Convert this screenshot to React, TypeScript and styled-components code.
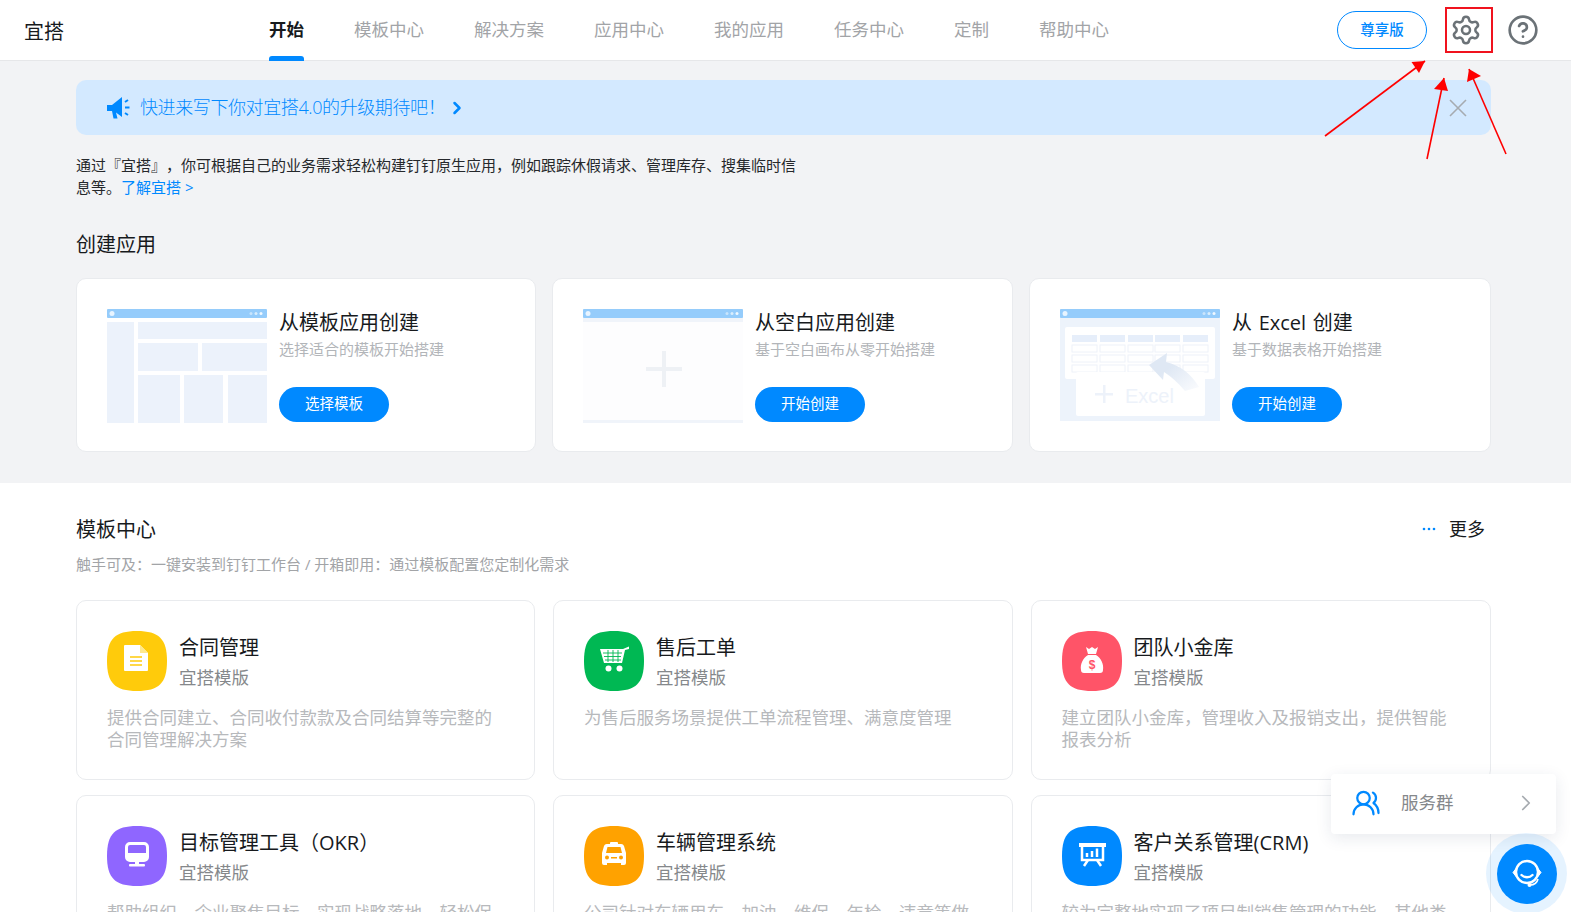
import React from "react";
import styled, { createGlobalStyle } from "styled-components";
import { ChevronRight, CircleHelp, Settings, UsersRound } from "lucide-react";

const FONT = `"Open Sans", "Noto Sans CJK SC", sans-serif`;
const BLUE = "#0089ff";

const GlobalStyle = createGlobalStyle`
    html, body {
        margin: 0;
        padding: 0;
        height: 100%;
        overflow: hidden;
        background: #fff;
        font-family: ${FONT};
        text-spacing-trim: space-all;
    }
    * {
        box-sizing: border-box;
    }
`;

const Page = styled.div`
    position: relative;
    width: 1571px;
    height: 912px;
    overflow: hidden;
    background: #fff;
    color: #171a1d;
`;

const Header = styled.header`
    display: flex;
    align-items: center;
    height: 61px;
    padding: 0 32px 0 24px;
    background: #fff;
    border-bottom: 1px solid #e6e7e9;
`;

const Logo = styled.div`
    width: 245px;
    padding-top: 3px;
    font-size: 20px;
    line-height: 60px;
`;

const Menu = styled.nav`
    display: flex;
    gap: 50px;
    height: 60px;
`;

const MenuItem = styled.a<{ $active?: boolean }>`
    position: relative;
    font-size: 17.5px;
    line-height: 58px;
    font-weight: ${(p) => (p.$active ? 700 : 400)};
    color: ${(p) => (p.$active ? "#171a1d" : "#a2a4a7")};
    ${(p) =>
        p.$active &&
        `&::after {
            content: "";
            position: absolute;
            left: 0;
            right: 0;
            bottom: -1px;
            height: 5px;
            border-radius: 3px 3px 0 0;
            background: ${BLUE};
        }`}
`;

const HeaderRight = styled.div`
    display: flex;
    align-items: center;
    margin-left: auto;
    color: #6b7277;
`;

const VipButton = styled.button`
    width: 90px;
    height: 38px;
    padding: 0 0 3px;
    margin-right: 23px;
    border: 1px solid ${BLUE};
    border-radius: 19px;
    background: #fff;
    color: ${BLUE};
    font-family: ${FONT};
    font-size: 14.5px;
    font-weight: 500;
`;

const HelpWrap = styled.span`
    display: flex;
    margin-left: 25px;
`;

const GraySection = styled.section`
    padding: 19px 80px 31px 76px;
    background: #f2f3f5;
`;

const Banner = styled.div`
    display: flex;
    align-items: center;
    height: 55px;
    padding: 0 23px 0 31px;
    border-radius: 10px;
    background: #d3e9ff;
    color: ${BLUE};
    font-size: 18px;
    font-weight: 300;
`;

const BannerText = styled.span`
    margin: 0 2px 0 10px;
    padding-bottom: 3px;
    letter-spacing: -0.4px;
`;

const BannerClose = styled.svg`
    margin-left: auto;
`;

const Intro = styled.p`
    width: 725px;
    margin: 19px 0 0;
    font-size: 15px;
    line-height: 22px;
    color: #25282b;
`;

const IntroLink = styled.a`
    color: ${BLUE};
`;

const SectionTitle = styled.h2`
    margin: 0;
    font-size: 20px;
    font-weight: 400;
    line-height: 30px;
`;

const CreateTitle = styled(SectionTitle)`
    margin-top: 32px;
`;

const CreateGrid = styled.div`
    display: grid;
    grid-template-columns: 460px 461px 1fr;
    gap: 16px;
    margin-top: 18px;
`;

const CreateCard = styled.div`
    display: flex;
    height: 174px;
    padding: 30px 30px 28px;
    border: 1px solid #e9ebee;
    border-radius: 10px;
    background: #fff;
`;

const CreateBody = styled.div`
    display: flex;
    flex-direction: column;
    align-items: flex-start;
    margin-left: 12px;
`;

const CreateName = styled.div`
    font-size: 20px;
    line-height: 28px;
    word-spacing: 1.5px;
`;

const CreateDesc = styled.div`
    margin-top: 2px;
    font-size: 15px;
    line-height: 20px;
    color: #b2b5b9;
`;

const PrimaryButton = styled.button`
    flex-shrink: 0;
    width: 110px;
    height: 35px;
    margin-top: 28px;
    padding: 0 0 5px;
    border: none;
    border-radius: 18px;
    background: ${BLUE};
    color: #fff;
    font-family: ${FONT};
    font-size: 14.5px;
`;

const WhiteSection = styled.section`
    padding: 32px 80px 0 76px;
    background: #fff;
`;

const TitleRow = styled.div`
    display: flex;
    align-items: center;
    justify-content: space-between;
`;

const MoreLink = styled.a`
    display: flex;
    align-items: center;
    gap: 13px;
    padding: 0 6px 2px 0;
    font-size: 18px;
    line-height: 28px;
`;

const Subtitle = styled.div`
    margin-top: 9px;
    font-size: 15px;
    line-height: 20px;
    color: #a2a4a7;
`;

const TemplateGrid = styled.div`
    display: grid;
    grid-template-columns: 459px 459.6px 1fr;
    gap: 15px 18px;
    margin-top: 26px;
`;

const TemplateCard = styled.div`
    height: 180px;
    padding: 30px;
    border: 1px solid #e9ebee;
    border-radius: 10px;
    background: #fff;
`;

const TemplateHead = styled.div`
    display: flex;
    gap: 12px;
`;

const TemplateName = styled.div`
    height: 29px;
    margin-top: 2px;
    font-size: 20px;
    line-height: 30px;
`;

const TemplateTag = styled.div`
    font-size: 17.5px;
    line-height: 30px;
    color: #85888b;
`;

const TemplateDesc = styled.div`
    margin-top: 14px;
    font-size: 17.5px;
    line-height: 22px;
    color: #b7b9bc;
`;

const ServicePanel = styled.div`
    position: absolute;
    left: 1331px;
    top: 774px;
    display: flex;
    align-items: center;
    width: 225px;
    height: 60px;
    padding: 0 17px 2px 20px;
    border-radius: 4px;
    background: #fff;
    box-shadow: 0 4px 16px rgba(30, 50, 90, 0.1);
    color: #85888b;
    font-size: 17.5px;
`;

const ServiceLabel = styled.span`
    margin: 0 auto 0 20px;
    padding-bottom: 4px;
`;

const HelpHalo = styled.div`
    position: absolute;
    left: 1486px;
    top: 833px;
    display: flex;
    align-items: center;
    justify-content: center;
    width: 81px;
    height: 81px;
    border-radius: 50%;
    background: rgba(0, 137, 255, 0.1);
`;

const HelpButton = styled.div`
    display: flex;
    align-items: center;
    justify-content: center;
    width: 60px;
    height: 60px;
    border-radius: 50%;
    background: ${BLUE};
`;

const Annotations = styled.svg`
    position: absolute;
    inset: 0;
    pointer-events: none;
`;

const Frame = ({ children }: { children: React.ReactNode }) => (
    <svg width="160" height="114" viewBox="0 0 160 114" style={{ flexShrink: 0 }}>
        {children}
        <rect width="160" height="9" rx="1" fill="#95ccfb" />
        <circle cx="5" cy="4.5" r="2.5" fill="#e8f4ff" />
        <circle cx="144" cy="4.5" r="1.5" fill="#c9e4fc" />
        <circle cx="149" cy="4.5" r="1.5" fill="#d9edfd" />
        <circle cx="154" cy="4.5" r="1.5" fill="#f0f8ff" />
    </svg>
);

const TemplateArt = () => (
    <Frame>
        <g fill="#ecf2fb">
            <rect x="0" y="13" width="27" height="101" />
            <rect x="31" y="13" width="129" height="17" />
            <rect x="31" y="34" width="60" height="28" />
            <rect x="95" y="34" width="65" height="28" />
            <rect x="31" y="66" width="42" height="48" />
            <rect x="77" y="66" width="39" height="48" />
            <rect x="121" y="66" width="39" height="48" />
        </g>
    </Frame>
);

const BlankArt = () => (
    <Frame>
        <rect width="160" height="114" fill="#f0f4fa" />
        <rect x="0" y="13" width="160" height="98" fill="#fdfdfe" />
        <rect x="63" y="58" width="36" height="4" fill="#eef1f5" />
        <rect x="79" y="42" width="4" height="36" fill="#eef1f5" />
    </Frame>
);

const ExcelArt = () => (
    <Frame>
        <defs>
            <linearGradient id="fade" x1="0" y1="0" x2="1" y2="1">
                <stop offset="0.4" stopColor="#dfe8f4" />
                <stop offset="1" stopColor="#fbfcfe" />
            </linearGradient>
        </defs>
        <rect width="160" height="112" fill="#edf3fb" />
        <rect x="5" y="18" width="150" height="52" rx="2" fill="#fff" />
        {[12, 40, 68, 95, 123].map((x) => (
            <g key={x}>
                <rect x={x} y="26" width="25" height="7" fill="#e6eefa" />
                <rect x={x} y="36" width="25" height="7" fill="#fff" stroke="#eef2f9" />
                <rect x={x} y="46" width="25" height="7" fill="#fff" stroke="#eef2f9" />
                <rect x={x} y="56" width="25" height="7" fill="#fff" stroke="#eef2f9" />
            </g>
        ))}
        <rect x="16" y="63" width="129" height="44" rx="2" fill="#fff" />
        <path d="M89 56 L107 44 L106 53 Q127 58 139 78 L125 82 Q115 70 104 63 L103 71 Z" fill="url(#fade)" />
        <rect x="35" y="84" width="18" height="2.5" fill="#edf2fa" />
        <rect x="43" y="76" width="2.5" height="18" fill="#edf2fa" />
        <text x="65" y="94" fontFamily="Liberation Sans, sans-serif" fontSize="20" fill="#edf2fa">
            Excel
        </text>
    </Frame>
);

const Squircle = ({ color, children }: { color: string; children: React.ReactNode }) => (
    <svg width="60" height="60" viewBox="0 0 60 60" style={{ flexShrink: 0 }}>
        <path d="M30 0C52 0 60 8 60 30S52 60 30 60 0 52 0 30 8 0 30 0Z" fill={color} />
        {children}
    </svg>
);

const ContractIcon = () => (
    <Squircle color="#ffcb0b">
        <path d="M18 14h15l8 8v17a1 1 0 0 1-1 1H18a1 1 0 0 1-1-1V15a1 1 0 0 1 1-1Z" fill="#fff" />
        <path d="M33 14v8h8Z" fill="#ffe98e" />
        <path d="M23 26h12M23 30h12M23 34h12" stroke="#ffcb0b" strokeWidth="1.6" />
    </Squircle>
);

const CartIcon = () => (
    <Squircle color="#00b853">
        <path d="M16 18h23l6-2.500v2.500l-4 1-3 13H20Z" fill="#fff" />
        <path d="M19 22h19M20 25.500h17M21 29h16M24 19v12M29 19v12M34 19v12" stroke="#00b853" strokeWidth="0.9" />
        <circle cx="24.500" cy="37.500" r="3" fill="#fff" />
        <circle cx="35.500" cy="37.500" r="3" fill="#fff" />
    </Squircle>
);

const BagIcon = () => (
    <Squircle color="#ff5468">
        <path d="M24 16l3 2 3-2 3 2 3-2-2 7h-8Z" fill="#fff" />
        <path d="M26 24h8c5 3 8 9 7 15 0 2-1 3-3 3H22c-2 0-3-1-3-3-1-6 2-12 7-15Z" fill="#fff" />
        <text x="30" y="38" textAnchor="middle" fontFamily="Liberation Sans, sans-serif" fontWeight="700" fontSize="12" fill="#ff5468">
            $
        </text>
    </Squircle>
);

const MonitorIcon = () => (
    <Squircle color="#8f66ff">
        <rect x="19.500" y="17.500" width="21" height="17" rx="3.500" fill="none" stroke="#fff" strokeWidth="3" />
        <rect x="20" y="27" width="20" height="7" fill="#fff" />
        <rect x="28" y="34" width="4" height="4" fill="#fff" />
        <rect x="22" y="38" width="16" height="2.500" rx="1" fill="#fff" />
    </Squircle>
);

const TaxiIcon = () => (
    <Squircle color="#ffa200">
        <rect x="26" y="16" width="8" height="3" rx="1" fill="#fff" />
        <path d="M23 18h14a3 3 0 0 1 3 2l2 7v10a2 2 0 0 1-2 2h-3v-2H23v2h-3a2 2 0 0 1-2-2V27l2-7a3 3 0 0 1 3-2Z" fill="#fff" />
        <path d="M23.500 21h13l1.500 6H22Z" fill="#ffa200" />
        <circle cx="23" cy="31.500" r="2" fill="#ffa200" />
        <circle cx="37" cy="31.500" r="2" fill="#ffa200" />
        <rect x="27" y="31" width="6" height="1.500" fill="#ffa200" />
    </Squircle>
);

const BoardIcon = () => (
    <Squircle color="#0089ff">
        <rect x="17" y="17" width="27" height="4" fill="#fff" />
        <path d="M20 20v14h21V20" fill="none" stroke="#fff" strokeWidth="2.500" />
        <path d="M25 27v4M30 25v6M35 22.500v8.500" stroke="#fff" strokeWidth="2.500" />
        <path d="M26 34l-4 6M35 34l4 6" stroke="#fff" strokeWidth="2.500" />
    </Squircle>
);

const createItems = [
    { art: <TemplateArt />, name: "从模板应用创建", desc: "选择适合的模板开始搭建", action: "选择模板" },
    { art: <BlankArt />, name: "从空白应用创建", desc: "基于空白画布从零开始搭建", action: "开始创建" },
    { art: <ExcelArt />, name: "从 Excel 创建", desc: "基于数据表格开始搭建", action: "开始创建" },
];

const templates = [
    { icon: <ContractIcon />, name: "合同管理", desc: "提供合同建立、合同收付款款及合同结算等完整的合同管理解决方案" },
    { icon: <CartIcon />, name: "售后工单", desc: "为售后服务场景提供工单流程管理、满意度管理" },
    { icon: <BagIcon />, name: "团队小金库", desc: "建立团队小金库，管理收入及报销支出，提供智能报表分析" },
    { icon: <MonitorIcon />, name: "目标管理工具（OKR）", desc: "帮助组织、企业聚焦目标、实现战略落地、轻松保" },
    { icon: <TaxiIcon />, name: "车辆管理系统", desc: "公司针对车辆用车、加油、维保、年检、违章等做" },
    { icon: <BoardIcon />, name: "客户关系管理(CRM)", desc: "较为完整地实现了项目制销售管理的功能，其他类" },
];

const menu = ["开始", "模板中心", "解决方案", "应用中心", "我的应用", "任务中心", "定制", "帮助中心"];

const arrows = [
    { from: [1325, 136], to: [1425, 61], head: "1425,61 1411.500,62 1419,73" },
    { from: [1427, 159], to: [1444, 78], head: "1444,78 1434,89 1448,91" },
    { from: [1506, 154], to: [1469, 69], head: "1469,69 1467,82 1481,76" },
];

const App = () => {
    return (
        <Page>
            <GlobalStyle />
            <Header>
                <Logo>宜搭</Logo>
                <Menu>
                    {menu.map((item, i) => (
                        <MenuItem key={item} $active={i === 0}>
                            {item}
                        </MenuItem>
                    ))}
                </Menu>
                <HeaderRight>
                    <VipButton>尊享版</VipButton>
                    <Settings size={32} strokeWidth={1.9} />
                    <HelpWrap>
                        <CircleHelp size={32} strokeWidth={2} />
                    </HelpWrap>
                </HeaderRight>
            </Header>

            <GraySection>
                <Banner>
                    <svg width="23" height="22" viewBox="0 0 23 22">
                        <path d="M0 8h5l10-8v20l-6-4.500 1.500 6H6.500L5 14H0Z" fill={BLUE} />
                        <path d="M18 5l3-2M18 10.500h4.500M18 16l3 2" stroke={BLUE} strokeWidth="2" />
                    </svg>
                    <BannerText>快进来写下你对宜搭4.0的升级期待吧！</BannerText>
                    <ChevronRight size={20} strokeWidth={3} />
                    <BannerClose width="20" height="20" viewBox="0 0 20 20">
                        <path d="M2 2l16 16M18 2L2 18" stroke="#a6abb0" strokeWidth="1.600" />
                    </BannerClose>
                </Banner>
                <Intro>
                    通过『宜搭』，你可根据自己的业务需求轻松构建钉钉原生应用，例如跟踪休假请求、管理库存、搜集临时信息等。
                    <IntroLink>了解宜搭 &gt;</IntroLink>
                </Intro>
                <CreateTitle>创建应用</CreateTitle>
                <CreateGrid>
                    {createItems.map((item) => (
                        <CreateCard key={item.name}>
                            {item.art}
                            <CreateBody>
                                <CreateName>{item.name}</CreateName>
                                <CreateDesc>{item.desc}</CreateDesc>
                                <PrimaryButton>{item.action}</PrimaryButton>
                            </CreateBody>
                        </CreateCard>
                    ))}
                </CreateGrid>
            </GraySection>

            <WhiteSection>
                <TitleRow>
                    <SectionTitle>模板中心</SectionTitle>
                    <MoreLink>
                        <svg width="14" height="4" viewBox="0 0 14 4">
                            <circle cx="2" cy="2" r="1.300" fill={BLUE} />
                            <circle cx="7" cy="2" r="1.300" fill={BLUE} />
                            <circle cx="12" cy="2" r="1.300" fill={BLUE} />
                        </svg>
                        更多
                    </MoreLink>
                </TitleRow>
                <Subtitle>触手可及：一键安装到钉钉工作台 / 开箱即用：通过模板配置您定制化需求</Subtitle>
                <TemplateGrid>
                    {templates.map((item) => (
                        <TemplateCard key={item.name}>
                            <TemplateHead>
                                {item.icon}
                                <div>
                                    <TemplateName>{item.name}</TemplateName>
                                    <TemplateTag>宜搭模版</TemplateTag>
                                </div>
                            </TemplateHead>
                            <TemplateDesc>{item.desc}</TemplateDesc>
                        </TemplateCard>
                    ))}
                </TemplateGrid>
            </WhiteSection>

            <ServicePanel>
                <UsersRound size={30} color={BLUE} strokeWidth={1.8} />
                <ServiceLabel>服务群</ServiceLabel>
                <ChevronRight size={26} color="#a6abb0" strokeWidth={1.6} />
            </ServicePanel>
            <HelpHalo>
                <HelpButton>
                    <svg width="36" height="36" viewBox="0 0 36 36" fill="none">
                        <circle cx="18" cy="16" r="11" stroke="#fff" strokeWidth="2.400" />
                        <path d="M12.500 19c3 3 8 3 11 0" stroke="#fff" strokeWidth="2.400" strokeLinecap="round" />
                        <path d="M7 12.500l-3 4 3 4ZM29 12.500l3 4-3 4Z" fill="#fff" stroke="#fff" strokeLinejoin="round" />
                        <path d="M29 23c-1 4-4 6-8 6" stroke="#fff" strokeWidth="1.600" />
                        <circle cx="20.500" cy="29" r="2" fill="#fff" />
                    </svg>
                </HelpButton>
            </HelpHalo>

            <Annotations width="1571" height="912" viewBox="0 0 1571 912">
                <rect x="1446" y="8" width="46" height="44" fill="none" stroke="#f0131e" strokeWidth="2" />
                {arrows.map((a) => (
                    <g key={a.head}>
                        <line x1={a.from[0]} y1={a.from[1]} x2={a.to[0]} y2={a.to[1]} stroke="#f00" strokeWidth="1.600" />
                        <polygon points={a.head} fill="#f00" />
                    </g>
                ))}
            </Annotations>
        </Page>
    );
};

export default App;
